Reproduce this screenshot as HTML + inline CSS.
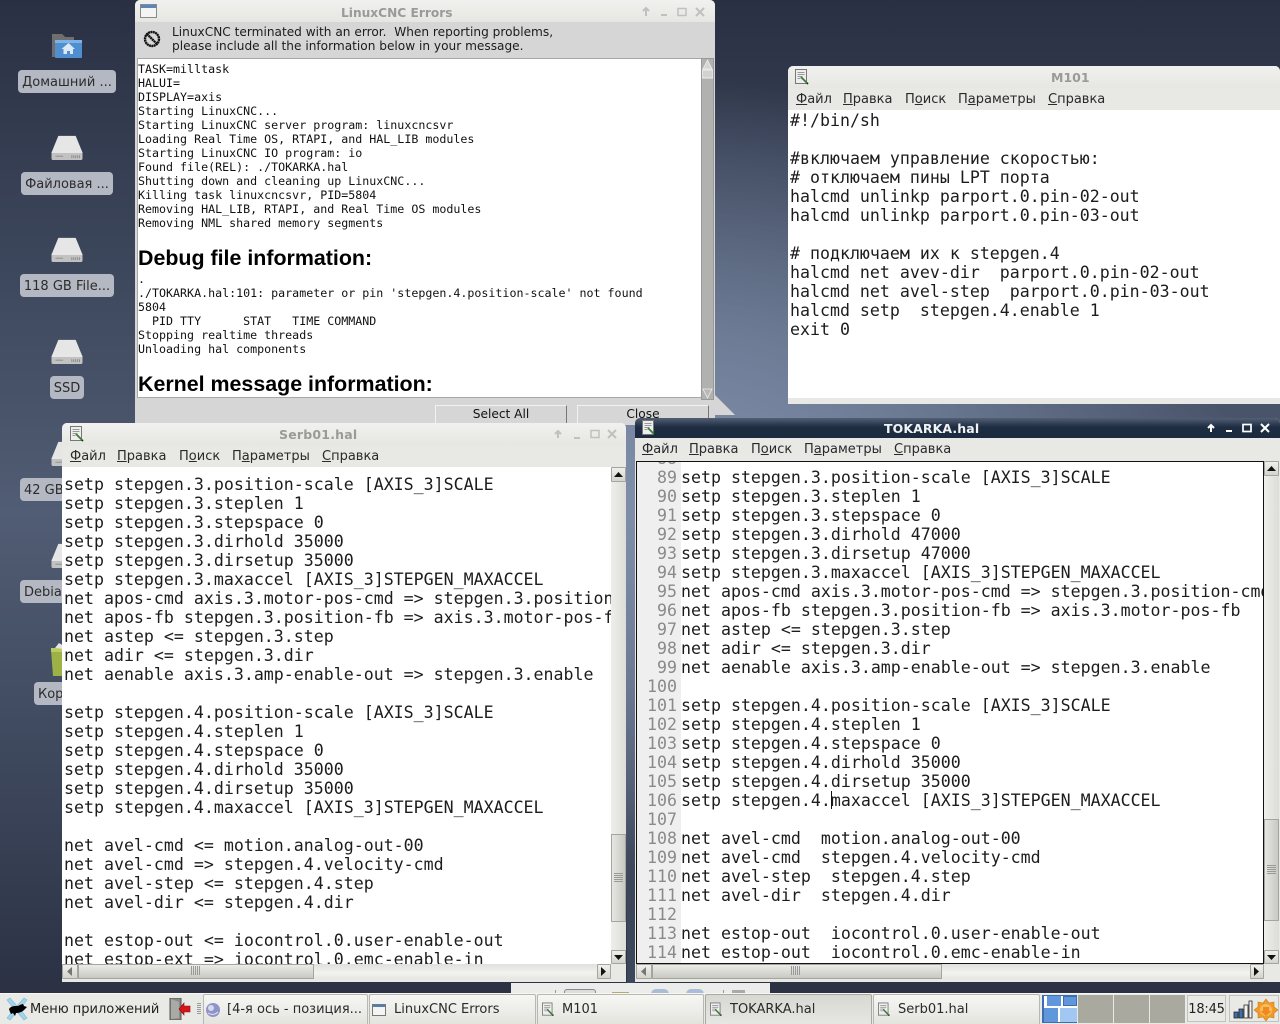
<!DOCTYPE html>
<html><head><meta charset="utf-8"><title>LinuxCNC</title>
<style>
html,body{margin:0;padding:0;width:1280px;height:1024px;overflow:hidden;background:#2a3043}
body{position:relative;font-family:"DejaVu Sans","Liberation Sans",sans-serif;font-size:13px;color:#222}
#bg{position:absolute;left:0;top:0;width:1280px;height:1024px;background:radial-gradient(ellipse 560px 420px at 680px 500px,rgba(130,145,172,1) 0,rgba(120,135,162,.8) 40%,rgba(90,104,130,0) 100%),linear-gradient(180deg,#2a3043 0,#3c465b 25%,#515d74 50%,#3d475c 75%,#292e40 100%)}
.a{position:absolute}
.win{position:absolute;background:#e8e8e4;overflow:hidden;border-radius:5px 5px 0 0}
.tb{position:absolute;left:0;top:0;right:0;background:linear-gradient(#f1f1ef,#e6e6e2);}
.tt{position:absolute;font-weight:bold;font-size:12.5px;color:#9a9a98;white-space:pre}
.m{position:absolute;font-size:13px;color:#2a2a2a;white-space:pre;line-height:16px}
pre{margin:0;font-family:"DejaVu Sans Mono","Liberation Mono",monospace;position:absolute}
.code{font-size:16.6px;line-height:19px;color:#1c1c1c}
.log{font-size:11.65px;line-height:14px;color:#111}
.lbl{position:absolute;height:23px;line-height:25px;background:#b4b8c2;border-radius:4px;color:#2c2c2c;text-align:center;font-size:13px;white-space:pre;overflow:hidden}
.sbt{position:absolute;background:linear-gradient(90deg,#eeeeea,#dcdcd8);}
.sbh{position:absolute;background:linear-gradient(#e0e0dc,#f2f2ef 60%,#e6e6e2);}
.btn{position:absolute;box-sizing:border-box;border:1px solid #a5a59f;background:linear-gradient(#efefec,#d4d4ce);border-radius:1px}
.thv{position:absolute;box-sizing:border-box;border:1px solid #a5a59f;background:linear-gradient(90deg,#e6e6e2,#c9c9c3);}
.thh{position:absolute;box-sizing:border-box;border:1px solid #a5a59f;background:linear-gradient(#ebebe7,#c9c9c3);}
.tk{position:absolute;top:994px;height:30px;box-sizing:border-box;border:1px solid #b8b8b2;border-bottom:0;background:linear-gradient(#f6f6f3,#e4e4df);border-radius:2px 2px 0 0;font-size:13px;line-height:30px;white-space:pre;color:#2a2a2a;overflow:hidden}
.tk span{position:absolute;top:0}
.tk svg{position:absolute;left:5px;top:7px}
</style></head><body>
<div id="bg"></div>

<svg width="0" height="0" style="position:absolute"><defs>
<symbol id="hd" viewBox="0 0 34 28"><path d="M8 2h18l7 17v6a2 2 0 0 1-2 2H3a2 2 0 0 1-2-2v-6z" fill="#e6e6e6"/><path d="M1 19h32v6a2 2 0 0 1-2 2H3a2 2 0 0 1-2-2z" fill="#c2c2c2"/><path d="M1 19l32 0" stroke="#f2f2f2"/><path d="M5 23h8M22 22v3M24 22v3M26 22v3M28 22v3M30 22v3" stroke="#8b8b8b"/></symbol>
<symbol id="doc" viewBox="0 0 16 16"><rect x=".5" y=".5" width="11" height="14" fill="#eee" stroke="#777"/><path d="M2.5 3.5h7M2.5 5.5h7M2.5 7.500h5M2.5 9.500h3" stroke="#999"/><path d="M6 8l6 6" stroke="#3b7a32" stroke-width="1.800"/><path d="M12 14l1 1" stroke="#222" stroke-width="1.600"/></symbol>
</defs></svg>

<!-- desktop icons -->
<svg class="a" style="left:51px;top:31px" width="32" height="28" viewBox="0 0 32 28"><path d="M1 3h10l3 3h9v5H1z" fill="#7d7d7b"/><path d="M1 3h10l3 3h9v20H1z" fill="#6f6f6d"/><rect x="4" y="9" width="27" height="18" rx="1" fill="#4f8fd0"/><rect x="4" y="9" width="27" height="3" fill="#7eb2e6"/><path d="M17.5 12l-7 6h2v5h3.5v-3h3v3H22v-5h2z" fill="#dbe8f5"/></svg>
<div class="lbl" style="left:18px;top:70px;width:98px">Домашний ...</div>
<svg class="a" style="left:50px;top:134px" width="34" height="27"><use href="#hd"/></svg>
<div class="lbl" style="left:21px;top:172px;width:92px">Файловая ...</div>
<svg class="a" style="left:50px;top:236px" width="34" height="27"><use href="#hd"/></svg>
<div class="lbl" style="left:20px;top:274px;width:94px">118 GB File...</div>
<svg class="a" style="left:50px;top:338px" width="34" height="27"><use href="#hd"/></svg>
<div class="lbl" style="left:50px;top:376px;width:34px">SSD</div>
<svg class="a" style="left:50px;top:440px" width="34" height="27"><use href="#hd"/></svg>
<div class="lbl" style="left:20px;top:478px;width:94px;text-align:left;padding-left:4px;box-sizing:border-box">42 GB File...</div>
<svg class="a" style="left:50px;top:542px" width="34" height="27"><use href="#hd"/></svg>
<div class="lbl" style="left:20px;top:580px;width:94px;text-align:left;padding-left:4px;box-sizing:border-box">Debian ...</div>
<svg class="a" style="left:50px;top:642px" width="16" height="34"><path d="M1 8h15v26H3z" fill="#9cb245"/><path d="M1 6h15v4H1z" fill="#b9cb62"/><path d="M5 6l4-5 5 3v3z" fill="#e6e6e0"/></svg>
<div class="lbl" style="left:34px;top:682px;width:60px;text-align:left;padding-left:4px;box-sizing:border-box">Корзина</div>

<!-- LinuxCNC Errors window -->
<div class="win" style="left:135px;top:0;width:580px;height:425px;background:#d6d6d6">
 <div class="tb" style="height:22px"></div>
 <svg class="a" style="left:5px;top:4px" width="18" height="15"><rect x=".5" y=".5" width="16" height="13" fill="#f4f4f4" stroke="#8a8a8a"/><rect x="1" y="1" width="15" height="3" fill="#5b86bd"/></svg>
 <div class="tt" style="left:206px;top:6px;font-size:12.200px">LinuxCNC Errors</div>
 <svg class="a" style="left:505px;top:5px" width="72" height="14" fill="none" stroke="#c0c0be" stroke-width="2"><path d="M6 11V3M3 6l3-3 3 3"/><path d="M21 10h6" /><rect x="38" y="3.500" width="8" height="7" stroke-width="1.500"/><path d="M56 3l8 8M64 3l-8 8"/></svg>
 <svg class="a" style="left:8px;top:30px" width="18" height="18" fill="none" stroke="#111" stroke-width="2.400" stroke-dasharray="2 .4"><circle cx="9" cy="9" r="7"/><path d="M4 4l10 10"/></svg>
 <div class="a" style="left:37px;top:25px;font-size:12.150px;line-height:14px;color:#1c1c1c;white-space:pre">LinuxCNC terminated with an error.  When reporting problems,
please include all the information below in your message.</div>
 <div class="a" style="left:2px;top:58px;width:565px;height:340px;background:#fff;overflow:hidden;box-shadow:inset 0 0 0 1px #a8a8a8">
<pre class="log" style="left:1px;top:4px">TASK=milltask
HALUI=
DISPLAY=axis
Starting LinuxCNC...
Starting LinuxCNC server program: linuxcncsvr
Loading Real Time OS, RTAPI, and HAL_LIB modules
Starting LinuxCNC IO program: io
Found file(REL): ./TOKARKA.hal
Shutting down and cleaning up LinuxCNC...
Killing task linuxcncsvr, PID=5804
Removing HAL_LIB, RTAPI, and Real Time OS modules
Removing NML shared memory segments</pre>
<div class="a" style="left:1px;top:187px;font:bold 21.400px/26px 'Liberation Sans',sans-serif;color:#000;white-space:pre">Debug file information:</div>
<pre class="log" style="left:1px;top:214px">.
./TOKARKA.hal:101: parameter or pin 'stepgen.4.position-scale' not found
5804
  PID TTY      STAT   TIME COMMAND
Stopping realtime threads
Unloading hal components</pre>
<div class="a" style="left:1px;top:313px;font:bold 21.400px/26px 'Liberation Sans',sans-serif;color:#000;white-space:pre">Kernel message information:</div>
 </div>
 <div class="a" style="left:566px;top:58px;width:13px;height:342px;background:#b1b1af;border:1px solid #999;box-sizing:border-box"></div>
 <svg class="a" style="left:567px;top:59px" width="11" height="340"><path d="M5.500 1L1 10h9z" fill="#d6d6d6" stroke="#eee" stroke-width=".8"/><rect x="0" y="11" width="11" height="8" fill="#d2d2d0" stroke="#f0f0f0"/><path d="M5.500 339L1 330h9z" fill="#b8b8b6" stroke="#eee" stroke-width=".8"/></svg>
 <div class="a" style="left:300px;top:405px;width:132px;height:22px;box-sizing:border-box;border:1px solid #888;border-color:#f2f2f2 #777 #777 #f2f2f2;text-align:center;font-size:12.200px;line-height:17px;color:#111">Select All</div>
 <div class="a" style="left:442px;top:405px;width:132px;height:22px;box-sizing:border-box;border:1px solid #888;border-color:#f2f2f2 #777 #777 #f2f2f2;text-align:center;font-size:12.200px;line-height:17px;color:#111">Close</div>
</div>

<!-- corner wedge behind errors window -->
<svg class="a" style="left:715px;top:395px" width="24" height="20"><path d="M0 0L20 20H0z" fill="#d6d6d6"/></svg>

<!-- M101 -->
<div class="win" style="left:788px;top:66px;width:492px;height:338px">
 <div class="tb" style="height:22px"></div>
 <svg class="a" style="left:7px;top:3px" width="16" height="16"><use href="#doc"/></svg>
 <div class="tt" style="left:263px;top:4px">M101</div>
 <div class="m" style="left:8px;top:26px"><u>Ф</u>айл</div><div class="m" style="left:55px;top:26px"><u>П</u>равка</div><div class="m" style="left:117px;top:26px">П<u>о</u>иск</div><div class="m" style="left:170px;top:26px">П<u>а</u>раметры</div><div class="m" style="left:260px;top:26px"><u>С</u>правка</div>
 <div class="a" style="left:0;top:44px;right:0;height:288px;background:#fff">
<pre class="code" style="left:2px;top:1px">#!/bin/sh

#включаем управление скоростью:
# отключаем пины LPT порта
halcmd unlinkp parport.0.pin-02-out
halcmd unlinkp parport.0.pin-03-out

# подключаем их к stepgen.4
halcmd net avev-dir  parport.0.pin-02-out
halcmd net avel-step  parport.0.pin-03-out
halcmd setp  stepgen.4.enable 1
exit 0</pre>
 </div>
</div>

<!-- bits of hidden window above taskbar -->
<div class="a" style="left:511px;top:983px;width:259px;height:11px;background:#ececea"></div>
<div class="a" style="left:555px;top:990px;width:1px;height:4px;background:#999"></div>
<div class="a" style="left:564px;top:989px;width:32px;height:5px;border:1px solid #888;border-bottom:0;border-radius:3px 3px 0 0;box-sizing:border-box;background:#ddd"></div>
<div class="a" style="left:612px;top:992px;width:17px;height:2px;background:#b9a971"></div>
<div class="a" style="left:651px;top:989px;width:18px;height:5px;background:#a9bdd8;border-radius:9px 9px 0 0"></div>
<div class="a" style="left:686px;top:989px;width:18px;height:5px;background:#a9bdd8;border-radius:9px 9px 0 0"></div>
<div class="a" style="left:723px;top:990px;width:1px;height:4px;background:#999"></div>
<div class="a" style="left:732px;top:990px;width:13px;height:4px;background:#aaa"></div>

<!-- Serb01 -->
<div class="win" style="left:62px;top:423px;width:564px;height:559px;">
 <div class="tb" style="height:22px"></div>
 <svg class="a" style="left:8px;top:3px" width="16" height="16"><use href="#doc"/></svg>
 <div class="tt" style="left:217px;top:4px;letter-spacing:.2px">Serb01.hal</div>
 <svg class="a" style="left:488px;top:4px" width="72" height="14" fill="none" stroke="#c0c0be" stroke-width="2"><path d="M8 11V4M5 7l3-3 3 3"/><path d="M24 11h6"/><rect x="41" y="3.500" width="8" height="7" stroke-width="1.500"/><path d="M58 3l8 8M66 3l-8 8"/></svg>
 <div class="m" style="left:8px;top:26px"><u>Ф</u>айл</div><div class="m" style="left:55px;top:26px"><u>П</u>равка</div><div class="m" style="left:117px;top:26px">П<u>о</u>иск</div><div class="m" style="left:170px;top:26px">П<u>а</u>раметры</div><div class="m" style="left:260px;top:26px"><u>С</u>правка</div>
 <div class="a" style="left:0;top:44px;width:549px;height:497px;background:#fff;overflow:hidden">
<pre class="code" style="left:2px;top:8px">setp stepgen.3.position-scale [AXIS_3]SCALE
setp stepgen.3.steplen 1
setp stepgen.3.stepspace 0
setp stepgen.3.dirhold 35000
setp stepgen.3.dirsetup 35000
setp stepgen.3.maxaccel [AXIS_3]STEPGEN_MAXACCEL
net apos-cmd axis.3.motor-pos-cmd => stepgen.3.position-cmd
net apos-fb stepgen.3.position-fb => axis.3.motor-pos-fb
net astep <= stepgen.3.step
net adir <= stepgen.3.dir
net aenable axis.3.amp-enable-out => stepgen.3.enable

setp stepgen.4.position-scale [AXIS_3]SCALE
setp stepgen.4.steplen 1
setp stepgen.4.stepspace 0
setp stepgen.4.dirhold 35000
setp stepgen.4.dirsetup 35000
setp stepgen.4.maxaccel [AXIS_3]STEPGEN_MAXACCEL

net avel-cmd <= motion.analog-out-00
net avel-cmd => stepgen.4.velocity-cmd
net avel-step <= stepgen.4.step
net avel-dir <= stepgen.4.dir

net estop-out <= iocontrol.0.user-enable-out
net estop-ext => iocontrol.0.emc-enable-in</pre>
 </div>
 <div class="sbt" style="left:549px;top:44px;width:15px;height:497px"></div>
 <div class="btn" style="left:549px;top:44px;width:15px;height:15px"></div>
 <svg class="a" style="left:552px;top:48px" width="9" height="7"><path d="M4.500 1L9 6H0z" fill="#111"/></svg>
 <div class="thv" style="left:549px;top:411px;width:15px;height:88px"></div>
 <svg class="a" style="left:552px;top:450px" width="9" height="10" stroke="#999"><path d="M0 .5h9M0 2.500h9M0 4.500h9M0 6.500h9M0 8.500h9"/></svg>
 <div class="btn" style="left:549px;top:527px;width:15px;height:14px"></div>
 <svg class="a" style="left:552px;top:531px" width="9" height="7"><path d="M4.500 6L9 1H0z" fill="#111"/></svg>
 <div class="sbh" style="left:0;top:541px;width:549px;height:15px"></div>
 <div class="btn" style="left:0;top:541px;width:16px;height:15px"></div>
 <svg class="a" style="left:4px;top:544px" width="7" height="9"><path d="M1 4.500L6 0v9z" fill="#777"/></svg>
 <div class="thh" style="left:16px;top:541px;width:236px;height:15px"></div>
 <svg class="a" style="left:129px;top:543px" width="10" height="9" stroke="#999"><path d="M.5 0v9M2.500 0v9M4.500 0v9M6.500 0v9M8.500 0v9"/></svg>
 <div class="btn" style="left:535px;top:541px;width:14px;height:15px"></div>
 <svg class="a" style="left:538px;top:544px" width="7" height="9"><path d="M6 4.500L1 0v9z" fill="#111"/></svg>
</div>

<!-- TOKARKA -->
<div class="a" style="left:627px;top:800px;width:8px;height:183px;background:linear-gradient(rgba(61,71,92,0),#3d475c 70%)"></div>
<div class="win" style="left:635px;top:418px;width:645px;height:564px">
 <div class="tb" style="height:20px;background:linear-gradient(#525f75,#1e2d42 45%,#1b2a3e)"></div>
 <svg class="a" style="left:7px;top:2px" width="16" height="16"><use href="#doc"/></svg>
 <div class="tt" style="left:249px;top:3px;color:#f0f2f4;letter-spacing:.1px">TOKARKA.hal</div>
 <svg class="a" style="left:569px;top:3px" width="72" height="14" fill="none" stroke="#fff" stroke-width="2"><path d="M7 11V4M4 7l3-3 3 3"/><path d="M22 10h6"/><rect x="39" y="3.500" width="8" height="7" stroke-width="1.700"/><path d="M57 3l8 8M65 3l-8 8"/></svg>
 <div class="m" style="left:7px;top:24px"><u>Ф</u>айл</div><div class="m" style="left:54px;top:24px"><u>П</u>равка</div><div class="m" style="left:116px;top:24px">П<u>о</u>иск</div><div class="m" style="left:169px;top:24px">П<u>а</u>раметры</div><div class="m" style="left:259px;top:24px"><u>С</u>правка</div>
 <div class="a" style="left:1px;top:43px;width:628px;height:503px;box-sizing:border-box;border:1px solid #111;background:#fff;overflow:hidden">
  <div class="a" style="left:0;top:0;width:44px;height:504px;background:#efefef"></div>
<pre class="code" style="left:0;top:-13px;width:40px;text-align:right;color:#8a8a8a">88
89
90
91
92
93
94
95
96
97
98
99
100
101
102
103
104
105
106
107
108
109
110
111
112
113
114</pre>
<pre class="code" style="left:44px;top:-13px">

setp stepgen.3.position-scale [AXIS_3]SCALE
setp stepgen.3.steplen 1
setp stepgen.3.stepspace 0
setp stepgen.3.dirhold 47000
setp stepgen.3.dirsetup 47000
setp stepgen.3.maxaccel [AXIS_3]STEPGEN_MAXACCEL
net apos-cmd axis.3.motor-pos-cmd => stepgen.3.position-cmd
net apos-fb stepgen.3.position-fb => axis.3.motor-pos-fb
net astep <= stepgen.3.step
net adir <= stepgen.3.dir
net aenable axis.3.amp-enable-out => stepgen.3.enable

setp stepgen.4.position-scale [AXIS_3]SCALE
setp stepgen.4.steplen 1
setp stepgen.4.stepspace 0
setp stepgen.4.dirhold 35000
setp stepgen.4.dirsetup 35000
setp stepgen.4.maxaccel [AXIS_3]STEPGEN_MAXACCEL

net avel-cmd  motion.analog-out-00
net avel-cmd  stepgen.4.velocity-cmd
net avel-step  stepgen.4.step
net avel-dir  stepgen.4.dir

net estop-out  iocontrol.0.user-enable-out
net estop-out  iocontrol.0.emc-enable-in</pre>
  <div class="a" style="left:194px;top:329px;width:1px;height:18px;background:#111"></div>
 </div>
 <div class="sbt" style="left:629px;top:43px;width:15px;height:503px"></div>
 <div class="btn" style="left:629px;top:43px;width:15px;height:15px"></div>
 <svg class="a" style="left:632px;top:47px" width="9" height="7"><path d="M4.500 1L9 6H0z" fill="#111"/></svg>
 <div class="thv" style="left:629px;top:401px;width:15px;height:102px"></div>
 <svg class="a" style="left:632px;top:447px" width="9" height="10" stroke="#999"><path d="M0 .5h9M0 2.500h9M0 4.500h9M0 6.500h9M0 8.500h9"/></svg>
 <div class="btn" style="left:629px;top:532px;width:15px;height:14px"></div>
 <svg class="a" style="left:632px;top:536px" width="9" height="7"><path d="M4.500 6L9 1H0z" fill="#111"/></svg>
 <div class="sbh" style="left:1px;top:546px;width:628px;height:15px"></div>
 <div class="btn" style="left:1px;top:546px;width:16px;height:15px"></div>
 <svg class="a" style="left:5px;top:549px" width="7" height="9"><path d="M1 4.500L6 0v9z" fill="#777"/></svg>
 <div class="thh" style="left:17px;top:546px;width:290px;height:15px"></div>
 <svg class="a" style="left:156px;top:548px" width="10" height="9" stroke="#999"><path d="M.5 0v9M2.500 0v9M4.500 0v9M6.500 0v9M8.500 0v9"/></svg>
 <div class="btn" style="left:615px;top:546px;width:14px;height:15px"></div>
 <svg class="a" style="left:618px;top:549px" width="7" height="9"><path d="M6 4.500L1 0v9z" fill="#111"/></svg>
</div>

<!-- Taskbar -->
<div class="a" style="left:0;top:993px;width:1280px;height:31px;background:#e9e9e5;border-top:1px solid #f6f6f4;box-sizing:border-box"></div>
<svg class="a" style="left:5px;top:997px" width="24" height="24"><path d="M2 3l3-2 7 8 7-8 3 2-7 9 7 9-3 2-7-8-7 8-3-2 7-9z" fill="#9fd4ee" stroke="#7fb8d6" stroke-width=".6"/><path d="M4 12c2-3 5-3 8-3 2 0 4-2 6-2l1 2 3 1-3 3c-2 2-5 3-8 3l-1 3-2-3-2 1-1-2z" fill="#000"/></svg>
<div class="a" style="left:30px;top:1002px;line-height:16px;font-size:13px;color:#222;white-space:pre">Меню приложений</div>
<svg class="a" style="left:169px;top:998px" width="22" height="22"><path d="M1 0h11v22H1z" fill="#8a8a88" stroke="#555"/><path d="M2 1l8 3v16l-8 1z" fill="#a9a9a6"/><path d="M21 8h-6V5l-5 6 5 6v-3h6z" fill="#d5141c" stroke="#8d0c10" stroke-width=".6"/></svg>
<div class="a" style="left:197px;top:1003px;width:4px;height:11px;background:repeating-linear-gradient(#999 0 1px,#e9e9e5 1px 2px)"></div>
<div class="tk" style="left:203px;width:165px"><svg width="16" height="16" style="left:1px" viewBox="0 0 16 16"><circle cx="8" cy="8" r="7" fill="#8e93c9"/><circle cx="6" cy="6" r="3" fill="#d7d9ef"/><path d="M3 11c3 2 7 2 10-1" stroke="#e4e5f4" fill="none"/></svg><span style="left:23px">[4-я ось - позиция...</span></div>
<div class="tk" style="left:369px;width:167px"><svg width="16" height="16" viewBox="0 0 16 16" style="left:2px"><rect x=".5" y="2.500" width="13" height="11" fill="#f4f4f4" stroke="#777"/><rect x="1" y="3" width="12" height="2" fill="#4f7fb8"/></svg><span style="left:24px">LinuxCNC Errors</span></div>
<div class="tk" style="left:537px;width:167px"><svg width="14" height="15" style="left:4px"><use href="#doc"/></svg><span style="left:24px">M101</span></div>
<div class="tk" style="left:705px;width:167px;background:linear-gradient(#d8d8d3,#e6e6e2);border-color:#a9a9a3"><svg width="14" height="15" style="left:4px"><use href="#doc"/></svg><span style="left:24px">TOKARKA.hal</span></div>
<div class="tk" style="left:873px;width:167px"><svg width="14" height="15" style="left:4px"><use href="#doc"/></svg><span style="left:24px">Serb01.hal</span></div>
<!-- pager -->
<div class="a" style="left:1042px;top:995px;width:35px;height:28px;background:#fff;box-shadow:inset 2px 0 0 #3c6eb0,inset 0 1px 0 #3c6eb0,inset 0 -1px 0 #3c6eb0"></div>
<div class="a" style="left:1047px;top:996px;width:14px;height:10px;background:#5f96dc"></div>
<div class="a" style="left:1063px;top:996px;width:14px;height:10px;background:#5f96dc;border:1px solid #3c6eb0;box-sizing:border-box"></div>
<div class="a" style="left:1044px;top:1008px;width:14px;height:14px;background:#5f96dc"></div>
<div class="a" style="left:1060px;top:1008px;width:17px;height:14px;background:#a3c7f3"></div>
<div class="a" style="left:1078px;top:995px;width:35px;height:28px;background:#a9a99f"></div>
<div class="a" style="left:1114px;top:995px;width:35px;height:28px;background:#a9a99f"></div>
<div class="a" style="left:1150px;top:995px;width:35px;height:28px;background:#a9a99f"></div>
<!-- clock -->
<div class="a" style="left:1187px;top:995px;width:39px;height:27px;box-sizing:border-box;border:1px solid #c2c2bc;text-align:center;line-height:27px;font-size:13px;color:#222;letter-spacing:-.2px">18:45</div>
<div class="a" style="left:1229px;top:995px;width:50px;height:27px;box-sizing:border-box;border:1px solid #c2c2bc"></div>
<svg class="a" style="left:1233px;top:1000px" width="20" height="19"><path d="M1 12h4v6H1z" fill="#3c6eb0" stroke="#222" stroke-width=".8"/><path d="M6 9h4v9H6z" fill="#3c6eb0" stroke="#222" stroke-width=".8"/><path d="M11 5h4v13h-4zM16 1h3v17h-3z" fill="#f2f2f2" stroke="#222" stroke-width=".8"/></svg>
<svg class="a" style="left:1254px;top:998px" width="24" height="24"><path d="M12 1l3 4 5-1 0 5 4 3-4 3 0 5-5-1-3 4-3-4-5 1 0-5-4-3 4-3 0-5 5 1z" fill="#f09a28" stroke="#c97a1a" stroke-width=".6"/><circle cx="12" cy="12" r="6" fill="#f7bd5c"/><path d="M9 9h6v4h2.500L12 18l-5.500-5H9z" fill="#f08a20"/></svg>
</body></html>
